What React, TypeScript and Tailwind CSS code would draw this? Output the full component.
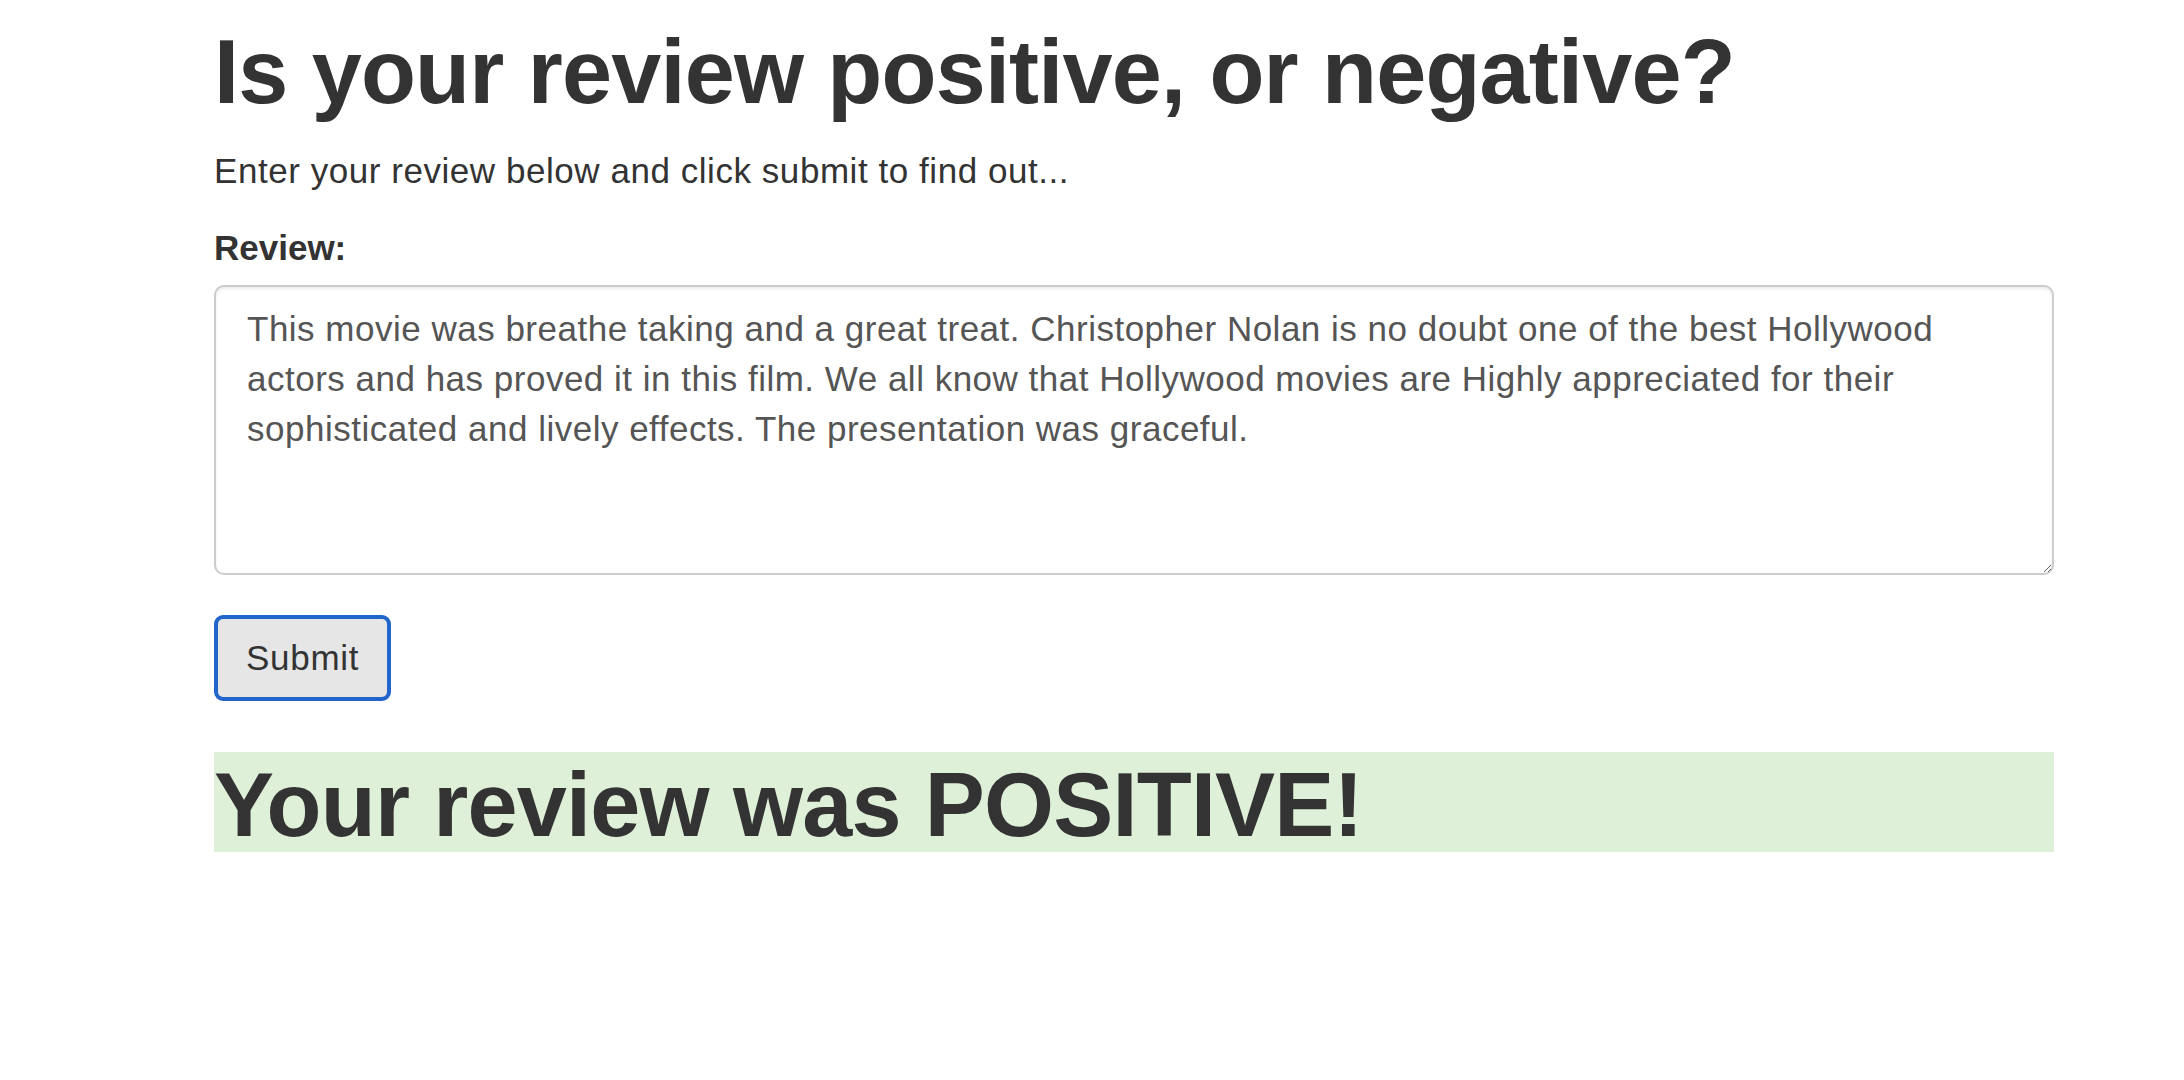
import React from "react";

const REVIEW =
  "This movie was breathe taking and a great treat. Christopher Nolan is no doubt one of the best Hollywood actors and has proved it in this film. We all know that Hollywood movies are Highly appreciated for their sophisticated and lively effects. The presentation was graceful.";

const FONT = '"Liberation Sans", Arial, Helvetica, sans-serif';

export default function App() {
  return (
    <div className="min-h-[1080px] w-full bg-white text-[#333333]" style={{ fontFamily: FONT }}>
      <div className="ml-[214px] w-[1840px] pt-[23px]">
        <h1 className="text-[90px] leading-[99px] font-bold tracking-[-0.8px]">
          Is your review positive, or negative?
        </h1>
        <p className="mt-[24px] text-[35px] leading-[50px] tracking-[0.55px]">
          Enter your review below and click submit to find out...
        </p>
        <label className="mt-[27px] block text-[35px] leading-[50px] font-bold">Review:</label>
        <textarea
          className="mt-[12px] block h-[290px] w-[1840px] rounded-[10px] border-2 border-[#cccccc] bg-white pt-[17px] pr-[20px] pl-[31px] text-[35px] leading-[50px] tracking-[0.5px] text-[#555555] shadow-[inset_0_2px_3px_rgba(0,0,0,0.08)] outline-none"
          defaultValue={REVIEW}
          style={{ fontFamily: FONT }}
        />
        <button
          className="mt-[40px] block h-[86px] w-[177px] rounded-[9px] border-[4px] border-[#2266cc] bg-[#e6e6e6] pl-[28px] text-left text-[35px] leading-[50px] tracking-[0.7px] text-[#333333]"
          style={{ fontFamily: FONT }}
        >
          Submit
        </button>
        <h1 className="mt-[51px] h-[100px] bg-[#dff0d8] pt-[3px] text-[90px] leading-[100px] font-bold tracking-[-0.8px]">
          Your review was POSITIVE!
        </h1>
      </div>
    </div>
  );
}
